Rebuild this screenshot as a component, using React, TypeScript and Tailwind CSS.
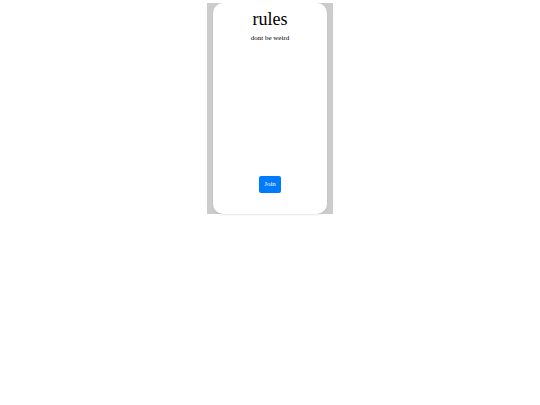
export default function App() {
  return (
    <div className="min-h-screen bg-white font-['Liberation_Serif',serif] text-black">
      <div className="mx-auto mt-[3px] flex h-[211px] w-[126px] justify-center bg-[#cccccc]">
        <div className="flex w-[114px] flex-col items-center rounded-[10px] bg-white pb-[21px] shadow-[0_1px_2px_rgba(0,0,0,0.1)]">
          <h1 className="mt-[4px] text-[18px] leading-[24px]">rules</h1>
          <p className="mt-[2px] text-[7px] leading-[10px]">dont be weird</p>
          <button className="mt-auto h-[17px] w-[22px] rounded-[2px] bg-[#007bff] text-[7px] text-white">
            Join
          </button>
        </div>
      </div>
    </div>
  );
}
